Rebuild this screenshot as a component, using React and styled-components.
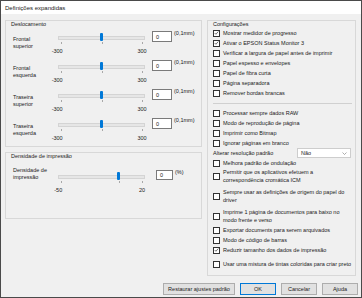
import React from "react";
import styled, { createGlobalStyle } from "styled-components";

const GlobalStyle = createGlobalStyle`
  html, body {
    margin: 0;
    padding: 0;
    background: #ffffff;
  }
  body {
    font-family: "Liberation Sans", Arial, sans-serif;
  }
`;

const Window = styled.div`
  width: 362px;
  height: 298px;
  box-sizing: border-box;
  border: 1px solid #4a4a4a;
  background: #f0f0f0;
  display: flex;
  flex-direction: column;
  color: #1a1a1a;
  font-size: 5.5px;
  overflow: hidden;
`;

const TitleBar = styled.div`
  height: 13px;
  background: #ffffff;
  padding-left: 4px;
  display: flex;
  align-items: center;
  font-size: 6px;
  color: #222;
`;

const Body = styled.div`
  flex: 1;
  display: flex;
  flex-direction: column;
  padding: 6px 3px 0 4px;
`;

const Main = styled.div`
  display: flex;
  gap: 5px;
`;

const LeftColumn = styled.div`
  display: flex;
  flex-direction: column;
  gap: 5px;
`;

const Group = styled.div`
  box-sizing: border-box;
  width: ${(p) => p.$width}px;
  height: ${(p) => p.$height}px;
  border: 1px solid #d8d8d8;
  padding: 0 3px 0 5px;
  display: flex;
  flex-direction: column;
`;

const Legend = styled.div`
  line-height: 7px;
  height: 7px;
`;

const SliderList = styled.div`
  display: flex;
  flex-direction: column;
  gap: 4px;
  padding-top: ${(p) => p.$top}px;
  padding-left: 2px;
`;

const SliderRow = styled.div`
  display: grid;
  grid-template-columns: 45px 87px ${(p) => p.$inputWidth}px auto;
  align-items: start;
  height: 25px;
`;

const RowLabel = styled.div`
  line-height: 7px;
  margin-top: ${(p) => p.$top}px;
`;

const Track = styled.div`
  position: relative;
  height: 25px;
`;

const TrackLine = styled.div`
  position: absolute;
  left: 0;
  right: 0;
  top: 4px;
  height: 2px;
  background: #e6e6e6;
  border: 0.5px solid #d4d4d4;
`;

const Thumb = styled.div`
  position: absolute;
  top: 1px;
  width: 3px;
  height: 8px;
  margin-left: -1.5px;
  background: #0078d7;
  border-radius: 1px;
`;

const Tick = styled.div`
  position: absolute;
  top: 10px;
  width: 1px;
  height: 2px;
  background: #a8a8a8;
`;

const ScaleLabel = styled.div`
  position: absolute;
  top: 16px;
  line-height: 7px;
  white-space: nowrap;
  transform: translateX(${(p) => (p.$min ? "-85%" : "-50%")});
`;

const NumberInput = styled.div`
  box-sizing: border-box;
  height: ${(p) => p.$height}px;
  margin-top: -1px;
  margin-left: ${(p) => p.$offset}px;
  background: #ffffff;
  border: 1px solid #7a7a7a;
  padding-left: 3px;
  display: flex;
  align-items: center;
`;

const Unit = styled.div`
  line-height: 7px;
  margin-top: -2px;
  margin-left: 2px;
  white-space: nowrap;
`;

const CheckList = styled.div`
  display: flex;
  flex-direction: column;
`;

const CheckRow = styled.div`
  display: flex;
  align-items: center;
  gap: 3px;
  min-height: 10px;
  margin-top: ${(p) => p.$before || 0}px;
  margin-bottom: ${(p) => p.$after || 0}px;
  white-space: nowrap;
`;

const CheckText = styled.div`
  line-height: 8px;
`;

const Box = styled.div`
  box-sizing: border-box;
  width: 7px;
  height: 7px;
  flex: none;
  border: 1px solid #333333;
  background: #ffffff;
  display: flex;
  align-items: center;
  justify-content: center;
`;

const Separator = styled.div`
  height: 1px;
  background: #d0d0d0;
  margin: 5px 0 4px 0;
`;

const SelectRow = styled.div`
  display: flex;
  align-items: center;
  height: 10px;
`;

const Select = styled.div`
  box-sizing: border-box;
  margin-left: auto;
  margin-right: 1px;
  width: 54px;
  height: 10px;
  background: #ffffff;
  border: 1px solid #cdcdcd;
  display: flex;
  align-items: center;
  justify-content: space-between;
  padding: 0 3px 0 3px;
`;

const Footer = styled.div`
  display: flex;
  justify-content: flex-end;
  gap: 5px;
  margin-top: 7px;
`;

const Button = styled.div`
  box-sizing: border-box;
  width: ${(p) => p.$width}px;
  height: 12px;
  background: #e1e1e1;
  border: 1px solid ${(p) => (p.$primary ? "#0078d7" : "#adadad")};
  display: flex;
  align-items: center;
  justify-content: center;
`;

function Slider({ min, max, value }) {
  const pos = (v) => 3 + ((v - min) / (max - min)) * 81;
  return (
    <Track>
      <TrackLine />
      <Tick style={{ left: pos(min) }} />
      <Tick style={{ left: pos(0) }} />
      <Tick style={{ left: pos(max) }} />
      <Thumb style={{ left: pos(value) }} />
      <ScaleLabel $min style={{ left: pos(min) }}>
        {min}
      </ScaleLabel>
      <ScaleLabel style={{ left: pos(max) }}>{max}</ScaleLabel>
    </Track>
  );
}

function Check({ checked }) {
  return (
    <Box>
      {checked && (
        <svg width="6" height="6" viewBox="0 0 6 6">
          <path
            d="M0.8 3 L2.3 4.5 L5.2 1.2"
            fill="none"
            stroke="#2a2a2a"
            strokeWidth="0.8"
          />
        </svg>
      )}
    </Box>
  );
}

const offsets = [
  ["Frontal", "superior"],
  ["Frontal", "esquerda"],
  ["Traseira", "superior"],
  ["Traseira", "esquerda"],
];

const topChecks = [
  ["Mostrar medidor de progresso", true],
  ["Ativar o EPSON Status Monitor 3", true],
  ["Verificar a largura de papel antes de imprimir", false],
  ["Papel espesso e envelopes", false],
  ["Papel de fibra curta", false],
  ["Página separadora", false],
  ["Remover bordas brancas", false],
];

const midChecks = [
  "Processar sempre dados RAW",
  "Modo de reprodução de página",
  "Imprimir como Bitmap",
  "Ignorar páginas em branco",
];

export default function App() {
  return (
    <>
      <GlobalStyle />
      <Window>
        <TitleBar>Definições expandidas</TitleBar>
        <Body>
          <Main>
            <LeftColumn>
              <Group $width={197} $height={127}>
                <Legend>Deslocamento</Legend>
                <SliderList $top={4}>
                  {offsets.map(([a, b]) => (
                    <SliderRow key={a + b} $inputWidth={27}>
                      <RowLabel $top={4}>
                        {a}
                        <br />
                        {b}
                      </RowLabel>
                      <Slider min={-300} max={300} value={0} />
                      <NumberInput $offset={7} $height={11}>
                        0
                      </NumberInput>
                      <Unit>(0,1mm)</Unit>
                    </SliderRow>
                  ))}
                </SliderList>
              </Group>
              <Group $width={197} $height={67}>
                <Legend>Densidade de impressão</Legend>
                <SliderList $top={11}>
                  <SliderRow $inputWidth={28}>
                    <RowLabel $top={-4}>
                      Densidade de
                      <br />
                      impressão
                    </RowLabel>
                    <Slider min={-50} max={20} value={0} />
                    <NumberInput $offset={11} $height={10}>
                      0
                    </NumberInput>
                    <Unit>(%)</Unit>
                  </SliderRow>
                </SliderList>
              </Group>
            </LeftColumn>
            <Group $width={149} $height={256}>
              <Legend>Configurações</Legend>
              <CheckList>
                {topChecks.map(([t, c]) => (
                  <CheckRow key={t}>
                    <Check checked={c} />
                    <CheckText>{t}</CheckText>
                  </CheckRow>
                ))}
                <Separator />
                {midChecks.map((t) => (
                  <CheckRow key={t}>
                    <Check />
                    <CheckText>{t}</CheckText>
                  </CheckRow>
                ))}
                <SelectRow>
                  <span>Alterar resolução padrão</span>
                  <Select>
                    <span>Não</span>
                    <svg width="5" height="3" viewBox="0 0 5 3">
                      <path d="M0.5 0.5 L2.5 2.5 L4.5 0.5" fill="none" stroke="#777" strokeWidth="0.6" />
                    </svg>
                  </Select>
                </SelectRow>
                <CheckRow>
                  <Check />
                  <CheckText>Melhora padrão de ondulação</CheckText>
                </CheckRow>
                <CheckRow $after={4}>
                  <Check />
                  <CheckText>
                    Permitir que os aplicativos efetuem a
                    <br />
                    correspondência cromática ICM
                  </CheckText>
                </CheckRow>
                <CheckRow $after={4}>
                  <Check />
                  <CheckText>
                    Sempre usar as definições de origem do papel do
                    <br />
                    driver
                  </CheckText>
                </CheckRow>
                <CheckRow $after={1}>
                  <Check />
                  <CheckText>
                    Imprime 1 página de documentos para baixo no
                    <br />
                    modo frente e verso
                  </CheckText>
                </CheckRow>
                <CheckRow>
                  <Check />
                  <CheckText>Exportar documents para serem arquivados</CheckText>
                </CheckRow>
                <CheckRow>
                  <Check />
                  <CheckText>Modo de código de barras</CheckText>
                </CheckRow>
                <CheckRow>
                  <Check checked />
                  <CheckText>Reduzir tamanho dos dados de impressão</CheckText>
                </CheckRow>
                <CheckRow $before={4}>
                  <Check />
                  <CheckText>Usar uma mistura de tintas coloridas para criar preto</CheckText>
                </CheckRow>
              </CheckList>
            </Group>
          </Main>
          <Footer>
            <Button $width={72}>Restaurar ajustes padrão</Button>
            <Button $width={36} $primary>
              OK
            </Button>
            <Button $width={36}>Cancelar</Button>
            <Button $width={36}>Ajuda</Button>
          </Footer>
        </Body>
      </Window>
    </>
  );
}
